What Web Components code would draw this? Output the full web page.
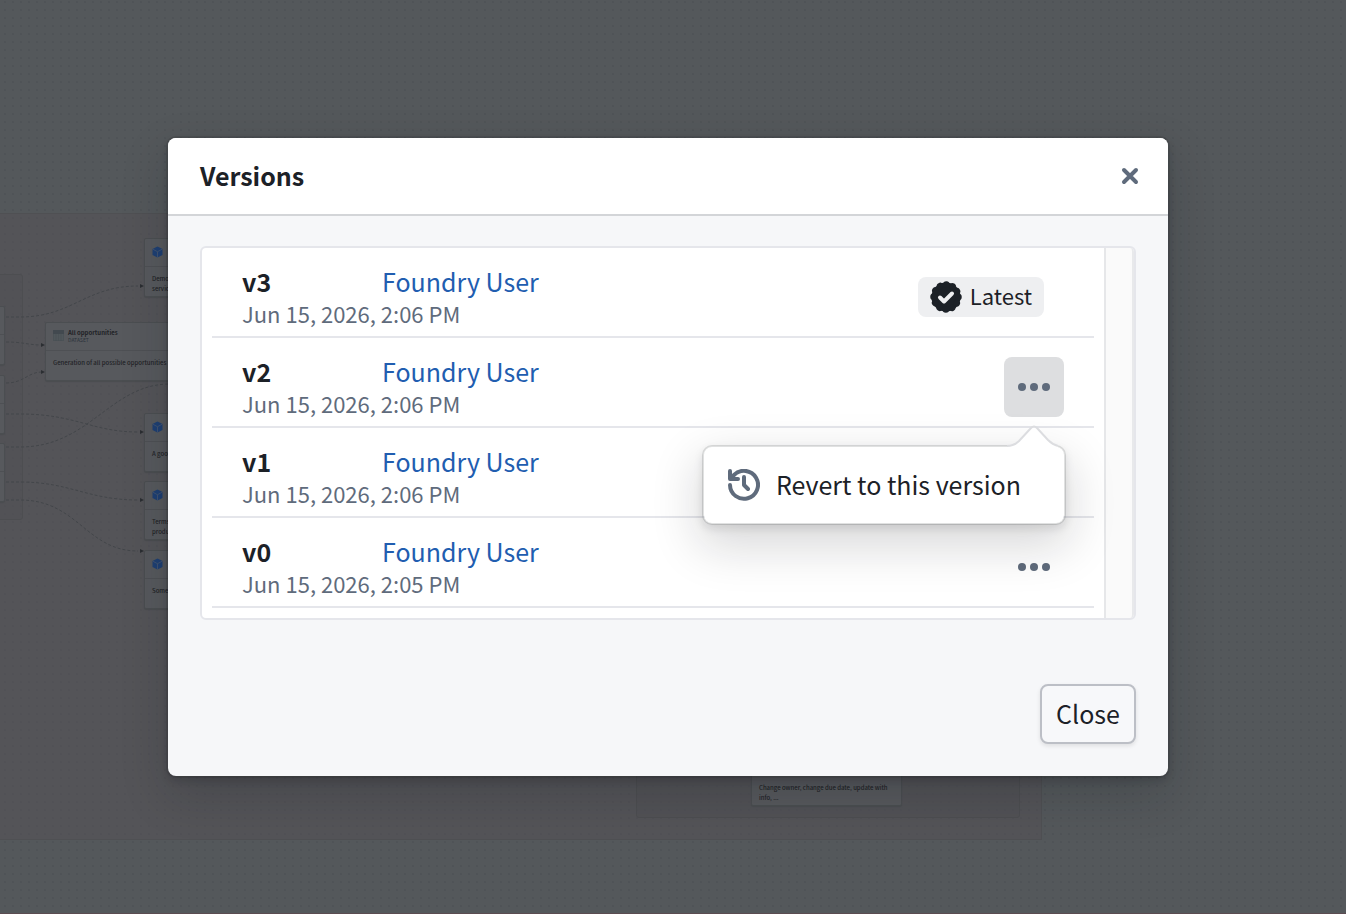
<!DOCTYPE html>
<html lang="en">
<head>
<meta charset="utf-8">
<title>Versions</title>
<style>
html, body { height: 100%; margin: 0; }
body { font-family: "Noto Sans CJK SC", "Noto Sans", sans-serif; color: #1c2127; overflow: hidden; background: #54585b; }
versions-app { height: 100%; }
</style>
</head>
<body>
<versions-app></versions-app>

<template id="t-app">
<style>
:host { display: grid; min-height: 100%; position: relative; }
graph-canvas { position: absolute; inset: 0; }
.overlay { position: relative; display: flex; align-items: center; justify-content: center; padding: 20px 10px 20px 0; box-sizing: border-box; }
</style>
<graph-canvas></graph-canvas>
<div class="overlay">
  <modal-dialog heading="Versions">
    <version-list></version-list>
    <action-button slot="footer" label="Close"></action-button>
  </modal-dialog>
</div>
</template>

<template id="t-canvas">
<style>
:host { display: block; overflow: hidden; background: radial-gradient(circle at 1px 1px, rgba(66,70,73,.8) 0, transparent 1px) 4px 1px / 8px 8px #54585b; border-bottom: 1px solid #5b4c51; box-sizing: border-box; }
.zone { position: absolute; box-sizing: border-box; border: 1px solid #4f5053; background: rgba(83, 80, 85, .5); }
.inner { position: absolute; box-sizing: border-box; border: 1px solid #4d4e51; border-radius: 3px; background: rgba(80, 80, 84, .3); }
svg { position: absolute; left: 0; top: 0; }
graph-node { position: absolute; }
</style>
<div class="zone" style="left:-2px;top:213px;width:1044px;height:627px"></div>
<div class="inner" style="left:-4px;top:274px;width:27px;height:246px"></div>
<div class="inner" style="left:636px;top:700px;width:384px;height:118px"></div>
<svg width="170" height="640" fill="none" stroke="#43464a" stroke-width="1" stroke-dasharray="3 2" aria-hidden="true">
  <path d="M6 317H20C72 317 86 286 138 286M6 342C24 342 28 345 42 345M6 383C24 383 28 372 42 372M6 414H20C76 414 92 432 138 432M6 447H20C90 447 110 384 170 384M6 482H20C70 482 88 500 138 500M6 500H20C78 500 86 551 138 551"/>
  <path fill="#2b2e32" stroke="none" d="M140 284l4 2-4 2zM41 343l4 2-4 2zM41 370l4 2-4 2zM140 430l4 2-4 2zM140 498l4 2-4 2zM140 549l4 2-4 2z"/>
</svg>
<graph-node style="left:-146px;top:306px"></graph-node>
<graph-node style="left:-146px;top:375px"></graph-node>
<graph-node style="left:-146px;top:443px"></graph-node>
<graph-node kind="cube" style="left:144px;top:238px">Demo<br>servic</graph-node>
<graph-node kind="table" heading="All opportunities" sub="DATASET" style="left:45px;top:322px">Generation of all possible opportunities</graph-node>
<graph-node kind="cube" style="left:144px;top:413px">A good</graph-node>
<graph-node kind="cube" style="left:144px;top:481px">Terms<br>produ</graph-node>
<graph-node kind="cube" style="left:144px;top:550px">Some</graph-node>
<graph-node style="left:751px;top:747px">Change owner, change due date, update with<br>info, ...</graph-node>
</template>

<template id="t-node">
<style>
:host { display: grid; grid-template-rows: 28px 1fr; width: 151px; height: 59px; box-sizing: border-box; border: 1px solid #4b4e51; border-radius: 2px; background: #57595d; box-shadow: 0 1px 1px #4b4d50; color: #1f2226; font-size: 6px; line-height: 10px; }
.head { display: flex; align-items: center; gap: 4px; padding: 0 7px 2px; border-bottom: 1px solid #4e5054; box-sizing: border-box; }
.names { line-height: 7px; }
.names b { display: block; }
.names span { display: block; font-size: 5px; color: #2a323b; }
.body { padding: 7px 7px 0; font-weight: 500; white-space: nowrap; }
</style>
<div class="head"><span class="icon"></span><div class="names"><b></b><span></span></div></div>
<div class="body"><slot></slot></div>
</template>

<template id="t-dialog">
<style>
:host { display: flex; flex-direction: column; width: 1000px; max-width: 90%; border-radius: 8px; background: #f6f7f9; box-shadow: 0 0 0 2px rgba(17,20,24,.1), 0 4px 8px rgba(17,20,24,.2), 0 18px 48px rgba(17,20,24,.2); }
header { display: flex; align-items: center; justify-content: space-between; height: 76px; padding: 0 28px 0 32px; background: #fff; border-bottom: 2px solid #d3d5d8; border-radius: 8px 8px 0 0; }
h2 { margin: 0; padding-bottom: 2px; font-size: 25px; line-height: 32px; font-weight: 700; }
button { display: grid; padding: 0; border: 0; background: none; }
main { padding: 30px 32px 0; }
footer { display: flex; justify-content: flex-end; padding: 64px 32px 32px; }
</style>
<header>
  <h2></h2>
  <button type="button" aria-label="Close dialog"><svg width="20" height="20" viewBox="0 0 20 20" fill="none" stroke="#5f6b7c" stroke-width="4" stroke-linecap="round"><path d="M4 4l12 12M16 4L4 16"/></svg></button>
</header>
<main><slot></slot></main>
<footer><slot name="footer"></slot></footer>
</template>

<template id="t-button">
<style>
:host { display: block; }
button { font: inherit; font-size: 25px; line-height: 32px; color: #1c2127; height: 60px; width: 96px; padding: 0 0 2px; border: 2px solid #bcbfc6; border-radius: 8px; background: #f7f8fa; box-shadow: 0 2px 4px rgba(17,20,24,.1); }
</style>
<button type="button"></button>
</template>

<template id="t-list">
<style>
:host { display: flex; box-sizing: border-box; height: 374px; border: 2px solid #e5e6eb; border-radius: 6px; background: #fff; }
.rows { flex: 1; padding: 0 10px; }
.track { width: 26px; border-left: 2px solid #e6e7e9; border-right: 2px solid #e8e9eb; background: #fafafa; border-radius: 0 4px 4px 0; }
</style>
<div class="rows">
  <version-row name="v3" time="Jun 15, 2026, 2:06 PM"><latest-tag></latest-tag></version-row>
  <version-row name="v2" time="Jun 15, 2026, 2:06 PM"><more-button open></more-button></version-row>
  <version-row name="v1" time="Jun 15, 2026, 2:06 PM"><more-button></more-button></version-row>
  <version-row name="v0" time="Jun 15, 2026, 2:05 PM"><more-button></more-button></version-row>
</div>
<div class="track"></div>
</template>

<template id="t-row">
<style>
:host { display: flex; align-items: center; justify-content: space-between; box-sizing: border-box; height: 90px; padding: 10px 30px 0; border-bottom: 2px solid #e5e6eb; }
.info { padding-bottom: 4px; }
.line { display: grid; grid-template-columns: 140px auto; font-size: 25px; line-height: 36px; }
b { font-weight: 700; }
a { color: #215db0; text-decoration: none; }
time { display: block; font-size: 22px; line-height: 28px; color: #5f6b7c; }
</style>
<div class="info"><div class="line"><b></b><a href="#user">Foundry User</a></div><time></time></div>
<slot></slot>
</template>

<template id="t-latest">
<style>
:host { display: flex; align-items: center; gap: 8px; box-sizing: border-box; height: 40px; padding: 0 12px; margin-right: 20px; border-radius: 8px; background: #eeeff1; font-size: 22px; line-height: 32px; }
span { padding-bottom: 4px; }
</style>
<svg width="32" height="32" viewBox="0 0 32 32" fill="none" aria-hidden="true"><circle cx="16" cy="16" r="14.600" fill="#1c2127"/><circle cx="16" cy="16" r="12.500" stroke="#1c2127" stroke-width="6.500" stroke-linecap="round" stroke-dasharray="0.01 6.535"/><path d="M10 16.500l4 4 8-8" stroke="#eeeff1" stroke-width="4" stroke-linecap="round" stroke-linejoin="round"/></svg>
<span>Latest</span>
</template>

<template id="t-more">
<style>
:host { display: block; position: relative; }
button { display: grid; place-items: center; width: 60px; height: 60px; padding: 0; border: 0; border-radius: 8px; background: none; }
:host([open]) button { background: #dddee0; }
revert-menu { position: absolute; z-index: 2; right: -2px; top: 88px; }
</style>
<button type="button" aria-label="Version actions"><svg width="32" height="8" viewBox="0 0 32 8" fill="#5f6b7c"><circle cx="4" cy="4" r="4"/><circle cx="16" cy="4" r="4"/><circle cx="28" cy="4" r="4"/></svg></button>
</template>

<template id="t-menu">
<style>
:host { display: block; width: 364px; box-sizing: border-box; border: 2px solid rgba(17,20,24,.13); background-clip: padding-box; background-color: #fff; border-radius: 10px; box-shadow: 0 4px 8px rgba(17,20,24,.1), 0 18px 48px 4px rgba(17,20,24,.16); }
.arrow { position: absolute; right: 2px; top: -23px; }
button { display: flex; align-items: center; gap: 16px; width: 100%; height: 76px; padding: 0 24px; border: 0; background: none; font: inherit; font-size: 25px; line-height: 32px; color: #1c2127; white-space: nowrap; }
span { padding-bottom: 2px; }
</style>
<svg class="arrow" width="56" height="24" viewBox="0 0 56 24" aria-hidden="true"><path fill="#fff" d="M1 24V22C9 22 12 18 14 16L25 5C27 3 29 3 31 5L42 16C44 18 48 21 52 22V24Z"/><path fill="none" stroke="#dcdde0" stroke-width="2" d="M1 22C8 22 11 19 13 17L25 4C27 2 29 2 31 4L42 16C45 19 48 21 52 22"/></svg>
<button type="button"><svg width="32" height="32" viewBox="0 0 32 32" fill="none" stroke="#5f6b7c" stroke-width="4" stroke-linecap="round" stroke-linejoin="round" aria-hidden="true"><path d="M2 16a14 14 0 1 0 4-10L3 9M2 2v8h8M16 8v8l4 4"/></svg><span>Revert to this version</span></button>
</template>

<script>
const CUBE = '<svg width="11" height="12" viewBox="0 0 11 12" style="display:block"><path fill="#1e3f73" d="M5.500.5l5 2.500v6l-5 2.500-5-2.500V3z"/><path fill="none" stroke="#4e5a70" stroke-width=".7" d="M.5 3l5 2.700 5-2.700M5.500 5.700v5.800"/></svg>';
const TABLE = '<svg width="11" height="11" viewBox="0 0 11 11" style="display:block"><path fill="#50575b" d="M0 0h11v11H0z"/><path fill="#42494f" d="M0 0h11v4H0z"/><path fill="none" stroke="#484f54" stroke-width=".6" d="M.5 4v6.500h10V4M3 4v7M5.500 4v7M8 4v7"/></svg>';

class Base extends HTMLElement {
  constructor() {
    super();
    this.attachShadow({ mode: 'open' }).append(document.getElementById(this.constructor.tpl).content.cloneNode(true));
  }
  $(s) { return this.shadowRoot.querySelector(s); }
  text(s, attr) { this.$(s).textContent = this.getAttribute(attr) || ''; }
}
const define = (name, tpl, setup) => customElements.define(name, class extends Base {
  static tpl = tpl;
  connectedCallback() { if (setup) setup(this); }
});

define('graph-node', 't-node', el => {
  el.text('b', 'heading');
  el.text('.names span', 'sub');
  el.$('.icon').innerHTML = { cube: CUBE, table: TABLE }[el.getAttribute('kind')] || '';
});
define('graph-canvas', 't-canvas');
define('action-button', 't-button', el => el.text('button', 'label'));
define('modal-dialog', 't-dialog', el => el.text('h2', 'heading'));
define('revert-menu', 't-menu');
define('more-button', 't-more', el => {
  if (el.hasAttribute('open') && !el.$('revert-menu')) el.shadowRoot.append(document.createElement('revert-menu'));
});
define('latest-tag', 't-latest');
define('version-row', 't-row', el => { el.text('b', 'name'); el.text('time', 'time'); });
define('version-list', 't-list');
define('versions-app', 't-app');
</script>
</body>
</html>
